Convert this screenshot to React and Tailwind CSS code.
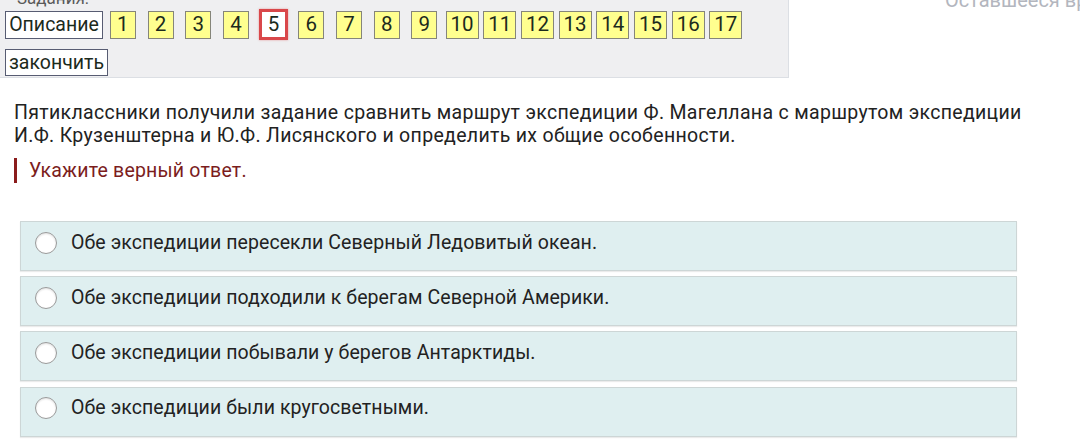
const tasks = Array.from({ length: 17 }, (_, i) => i + 1);
const current = 5;

const answers = [
  "Обе экспедиции пересекли Северный Ледовитый океан.",
  "Обе экспедиции подходили к берегам Северной Америки.",
  "Обе экспедиции побывали у берегов Антарктиды.",
  "Обе экспедиции были кругосветными.",
];

function TaskButton({ n }) {
  const active = n === current;
  return (
    <div className="flex w-[37.7px] shrink-0 items-center justify-center">
      {active ? (
        <span className="flex h-[31px] min-w-[29px] items-center justify-center border-[3px] border-[#d9474a] bg-white px-[4px] leading-none text-[#1c2a1c] shadow-[0_0_2px_rgba(217,71,74,0.5)]">
          {n}
        </span>
      ) : (
        <span className="flex h-[28px] min-w-[26px] items-center justify-center border border-[#85857a] bg-[#ffff8f] px-[4px] leading-none text-[#1c2a1c]">
          {n}
        </span>
      )}
    </div>
  );
}

export default function App() {
  return (
    <div className="h-[442px] w-[1080px] overflow-hidden bg-white font-['Roboto','Liberation_Sans',sans-serif]">
      {/* Task navigation panel + timer */}
      <div className="flex">
        <div className="h-[78px] w-[789px] shrink-0 border-r border-b border-[#dcdfe4] bg-[#efeff1] pl-[5px]">
          <div className="-mt-[11px] h-[18px] pl-[12px] text-[17px] leading-[18px] text-[#5a5a5a]">
            Задания:
          </div>
          <div className="mt-[2px] flex h-[31px] items-center text-[20.5px]">
            <span className="flex h-[28px] w-[98px] items-center justify-center border border-[#575c72] bg-white text-[19.5px] leading-none text-[#1c2a1c]">
              Описание
            </span>
            <div className="w-[1px]" />
            {tasks.map((n) => (
              <TaskButton key={n} n={n} />
            ))}
          </div>
          <div className="mt-[9px] flex">
            <span className="flex h-[27px] w-[103px] items-center justify-center border border-[#575c72] bg-white text-[19.5px] leading-none text-[#1c2a1c]">
              закончить
            </span>
          </div>
        </div>
        <div className="min-w-0 flex-1 overflow-hidden whitespace-nowrap pl-[156px]">
          <div className="-mt-[10px] text-[20px] leading-[20px] text-[#b3b6be]">
            Оставшееся время
          </div>
        </div>
      </div>

      {/* Question */}
      <p className="mt-[24px] w-[1040px] pl-[14px] text-[19.5px] leading-[22.5px] tracking-[0.32px] text-[#222222]">
        Пятиклассники получили задание сравнить маршрут экспедиции Ф. Магеллана с маршрутом экспедиции
        И.Ф. Крузенштерна и Ю.Ф. Лисянского и определить их общие особенности.
      </p>
      <div className="ml-[14px] mt-[11px] border-l-[3px] border-[#8b1c1c] pl-[12px] text-[19.5px] leading-[25px] tracking-[0.2px] text-[#7b1d1d]">
        Укажите верный ответ.
      </div>

      {/* Answer options */}
      <div className="ml-[20px] mt-[38px] flex w-[997px] flex-col gap-[5.2px]">
        {answers.map((a) => (
          <label
            key={a}
            className="flex h-[50px] items-center border border-[#cdd6d6] bg-[#dfeff0] pb-[7px] pl-[14px] shadow-[0_1px_1px_rgba(0,0,0,0.08)]"
          >
            <span className="h-[22px] w-[22px] shrink-0 rounded-full border border-[#9a9a9a] bg-white shadow-[inset_0_1px_2px_rgba(0,0,0,0.12)]" />
            <span className="ml-[14px] text-[19.5px] tracking-[0.08px] text-[#222222]">{a}</span>
          </label>
        ))}
      </div>
    </div>
  );
}
